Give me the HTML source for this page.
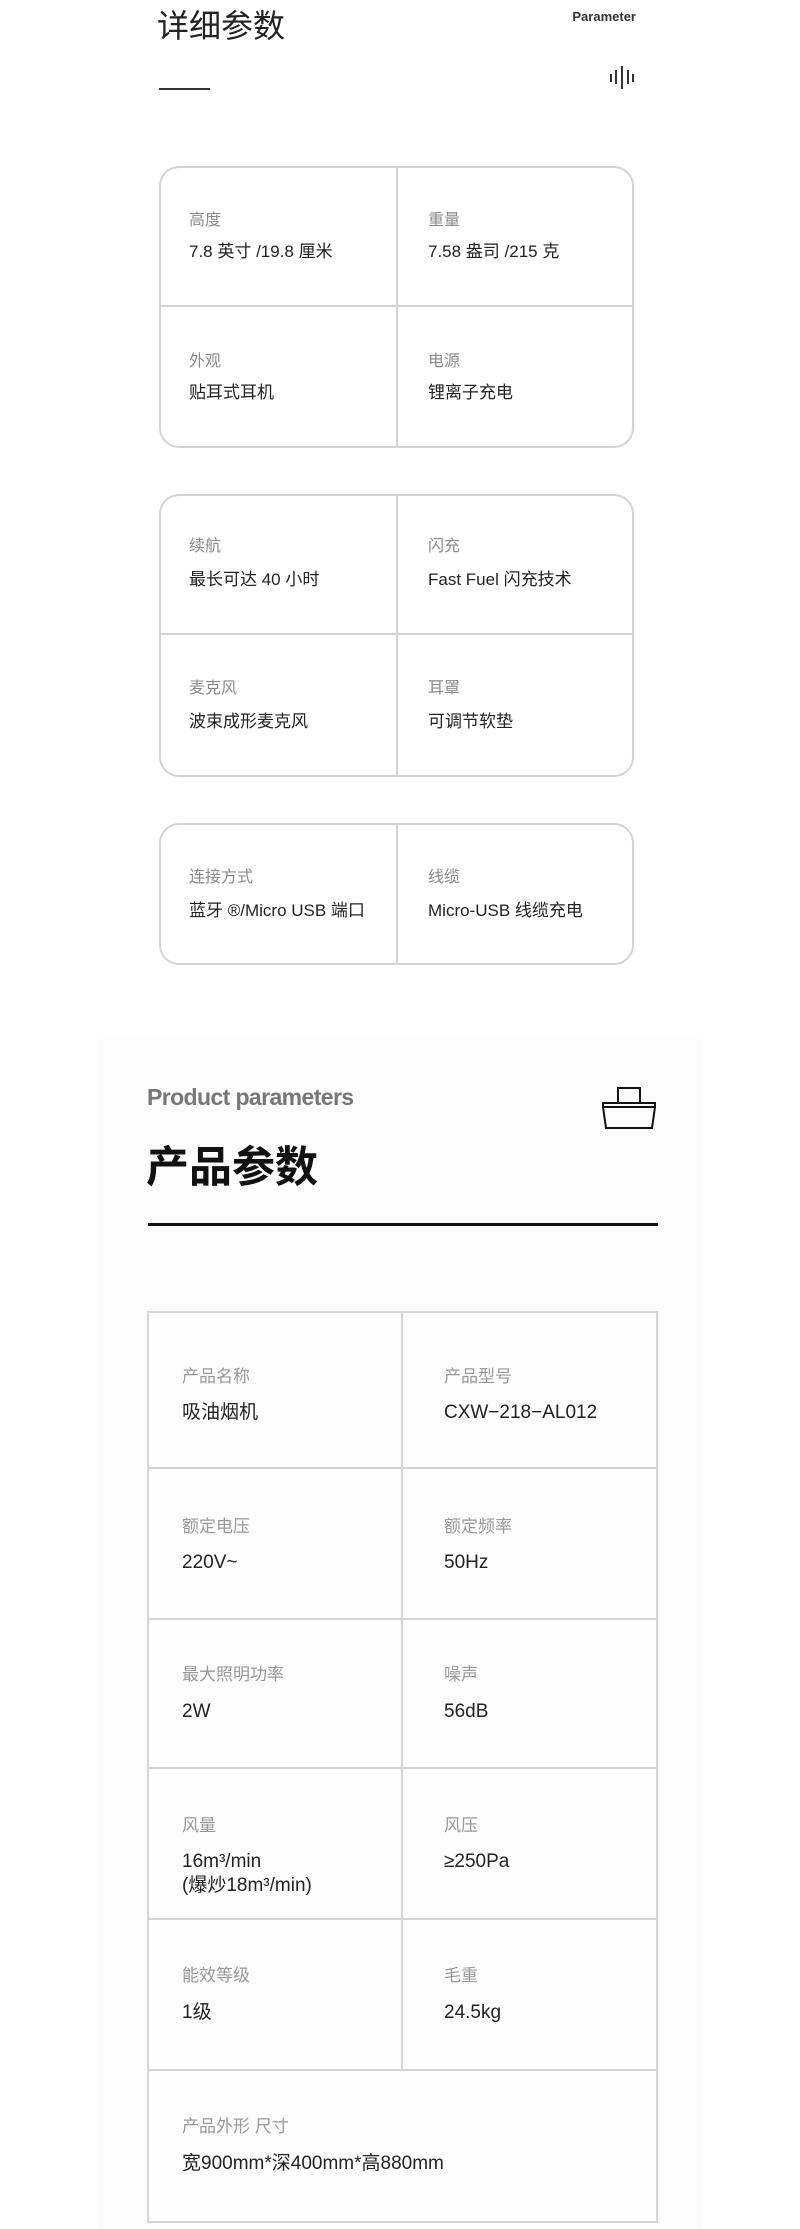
<!DOCTYPE html>
<html><head><meta charset="utf-8"><style>
*{margin:0;padding:0;box-sizing:border-box}
body{width:800px;height:2229px;background:#fff;position:relative;overflow:hidden;font-family:"Liberation Sans","Noto Sans CJK SC",sans-serif;color:#222}
.a{position:absolute;white-space:nowrap}
.card{position:absolute;left:159px;width:475px;border:2px solid #d4d4d4;border-radius:20px}
.vl{position:absolute;background:#d4d4d4}
.lb{position:absolute;font-size:16px;color:#8a8a8a;line-height:20px;white-space:nowrap}
.vv{position:absolute;font-size:17px;color:#222;line-height:20px;white-space:nowrap}
.lb2{position:absolute;font-size:17px;color:#999;line-height:22px;white-space:nowrap}
.vv2{position:absolute;font-size:19px;color:#222;line-height:24px;white-space:nowrap}
</style></head><body>
<div class="a" style="left:157px;top:8px;font-size:32px;line-height:36px;color:#222">详细参数</div>
<div class="a" style="left:558px;top:9px;width:78px;text-align:right;font-size:13px;font-weight:bold;color:#333">Parameter</div>
<div class="a" style="left:159px;top:88px;width:51px;height:2px;background:#333"></div>
<svg class="a" style="left:605px;top:62px" width="36" height="32"><g stroke="#333" stroke-width="2"><line x1="6" y1="12" x2="6" y2="20"/><line x1="11" y1="8" x2="11" y2="22"/><line x1="17" y1="4" x2="17" y2="27"/><line x1="23" y1="8" x2="23" y2="22"/><line x1="28" y1="12" x2="28" y2="20"/></g></svg>

<div class="card" style="top:166px;height:282px"></div>
<div class="vl" style="left:396px;top:167px;width:2px;height:280px"></div>
<div class="vl" style="left:160px;top:305px;width:473px;height:2px"></div>
<div class="lb" style="left:189px;top:211px">高度</div><div class="vv" style="left:189px;top:242px">7.8 英寸 /19.8 厘米</div>
<div class="lb" style="left:428px;top:211px">重量</div><div class="vv" style="left:428px;top:242px">7.58 盎司 /215 克</div>
<div class="lb" style="left:189px;top:352px">外观</div><div class="vv" style="left:189px;top:383px">贴耳式耳机</div>
<div class="lb" style="left:428px;top:352px">电源</div><div class="vv" style="left:428px;top:383px">锂离子充电</div>

<div class="card" style="top:494px;height:283px"></div>
<div class="vl" style="left:396px;top:495px;width:2px;height:281px"></div>
<div class="vl" style="left:160px;top:633px;width:473px;height:2px"></div>
<div class="lb" style="left:189px;top:537px">续航</div><div class="vv" style="left:189px;top:570px">最长可达 40 小时</div>
<div class="lb" style="left:428px;top:537px">闪充</div><div class="vv" style="left:428px;top:570px">Fast Fuel 闪充技术</div>
<div class="lb" style="left:189px;top:679px">麦克风</div><div class="vv" style="left:189px;top:712px">波束成形麦克风</div>
<div class="lb" style="left:428px;top:679px">耳罩</div><div class="vv" style="left:428px;top:712px">可调节软垫</div>

<div class="card" style="top:823px;height:142px"></div>
<div class="vl" style="left:396px;top:824px;width:2px;height:140px"></div>
<div class="lb" style="left:189px;top:868px">连接方式</div><div class="vv" style="left:189px;top:901px">蓝牙 ®/Micro USB 端口</div>
<div class="lb" style="left:428px;top:868px">线缆</div><div class="vv" style="left:428px;top:901px">Micro-USB 线缆充电</div>

<div class="a" style="left:97px;top:1039px;width:606px;height:1190px;background:#fcfcfc"></div>
<div class="a" style="left:147px;top:1082px;font-size:23px;font-weight:bold;color:#777;letter-spacing:-0.6px;line-height:30px">Product parameters</div>
<svg class="a" style="left:600px;top:1086px" width="60" height="46"><g fill="none" stroke="#111" stroke-width="2"><rect x="18" y="2" width="22" height="15"/><rect x="3" y="17" width="52" height="4"/><path d="M3 21 L6 42 L52 42 L55 21"/></g></svg>
<div class="a" style="left:146px;top:1143px;font-size:43px;font-weight:bold;color:#111;line-height:50px">产品参数</div>
<div class="a" style="left:148px;top:1223px;width:510px;height:3px;background:#111"></div>

<div class="a" style="left:147px;top:1311px;width:511px;height:912px;border:2px solid #d6d6d6;background:#fdfdfd"></div>
<div class="vl" style="left:401px;top:1312px;width:2px;height:759px"></div>
<div class="vl" style="left:148px;top:1467px;width:509px;height:2px"></div>
<div class="vl" style="left:148px;top:1618px;width:509px;height:2px"></div>
<div class="vl" style="left:148px;top:1767px;width:509px;height:2px"></div>
<div class="vl" style="left:148px;top:1918px;width:509px;height:2px"></div>
<div class="vl" style="left:148px;top:2069px;width:509px;height:2px"></div>

<div class="lb2" style="left:182px;top:1366px">产品名称</div><div class="vv2" style="left:182px;top:1401px">吸油烟机</div>
<div class="lb2" style="left:444px;top:1366px">产品型号</div><div class="vv2" style="left:444px;top:1401px">CXW−218−AL012</div>
<div class="lb2" style="left:182px;top:1516px">额定电压</div><div class="vv2" style="left:182px;top:1551px">220V~</div>
<div class="lb2" style="left:444px;top:1516px">额定频率</div><div class="vv2" style="left:444px;top:1551px">50Hz</div>
<div class="lb2" style="left:182px;top:1664px">最大照明功率</div><div class="vv2" style="left:182px;top:1700px">2W</div>
<div class="lb2" style="left:444px;top:1664px">噪声</div><div class="vv2" style="left:444px;top:1700px">56dB</div>
<div class="lb2" style="left:182px;top:1815px">风量</div><div class="vv2" style="left:182px;top:1850px">16m³/min</div><div class="vv2" style="left:182px;top:1874px">(爆炒18m³/min)</div>
<div class="lb2" style="left:444px;top:1815px">风压</div><div class="vv2" style="left:444px;top:1850px">≥250Pa</div>
<div class="lb2" style="left:182px;top:1965px">能效等级</div><div class="vv2" style="left:182px;top:2001px">1级</div>
<div class="lb2" style="left:444px;top:1965px">毛重</div><div class="vv2" style="left:444px;top:2001px">24.5kg</div>
<div class="lb2" style="left:182px;top:2116px">产品外形 尺寸</div><div class="vv2" style="left:182px;top:2152px">宽900mm*深400mm*高880mm</div>
</body></html>
